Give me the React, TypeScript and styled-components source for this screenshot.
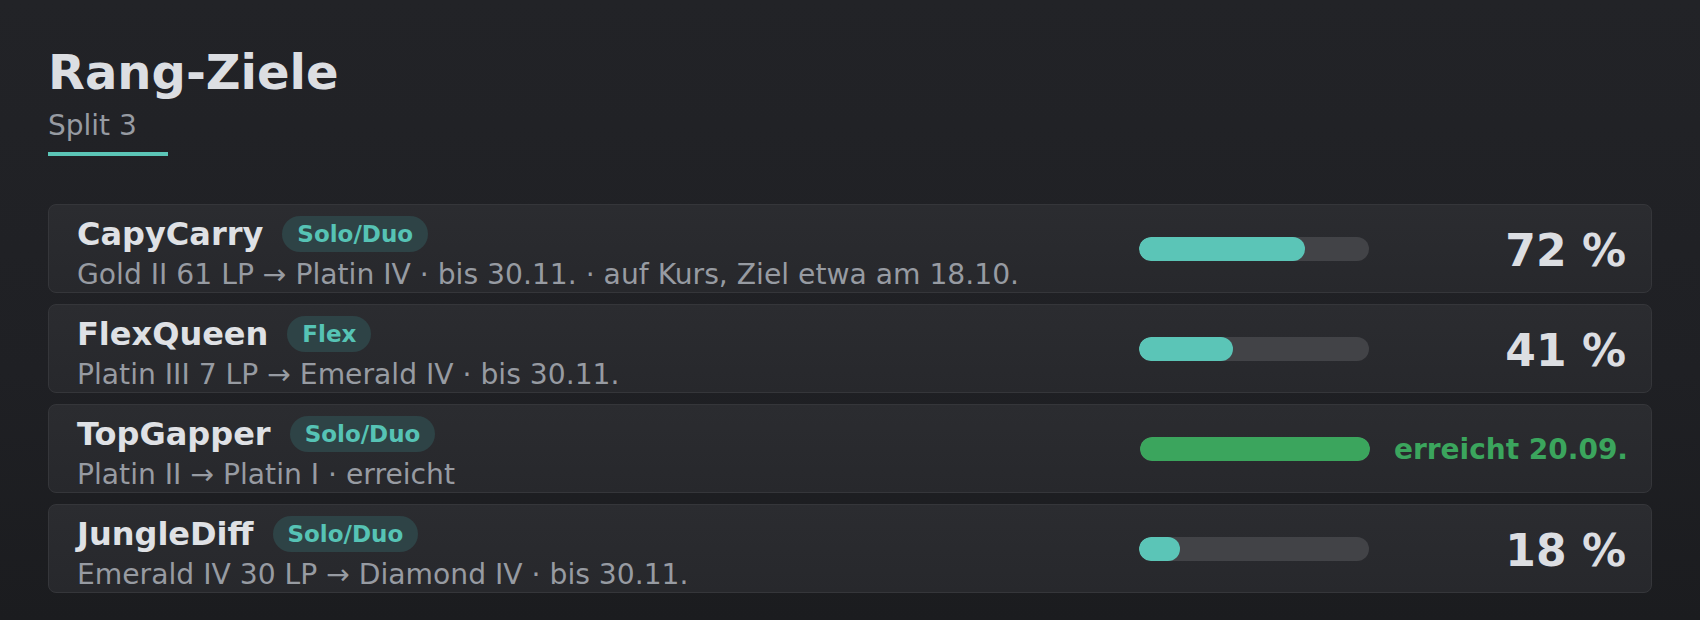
import React from 'react';
import styled, { createGlobalStyle } from 'styled-components';

type Goal = {
    id: number,
    name: string,
    queue: string,
    route: string,
    progress: number,
    reached?: string
}

const goals: Goal[] = [
    { id: 1, name: 'CapyCarry', queue: 'Solo/Duo', route: 'Gold II 61 LP → Platin IV · bis 30.11. · auf Kurs, Ziel etwa am 18.10.', progress: 72 },
    { id: 2, name: 'FlexQueen', queue: 'Flex', route: 'Platin III 7 LP → Emerald IV · bis 30.11.', progress: 41 },
    { id: 3, name: 'TopGapper', queue: 'Solo/Duo', route: 'Platin II → Platin I · erreicht', progress: 100, reached: 'erreicht 20.09.' },
    { id: 4, name: 'JungleDiff', queue: 'Solo/Duo', route: 'Emerald IV 30 LP → Diamond IV · bis 30.11.', progress: 18 },
]

const teal = '#5bc5b7';
const green = '#3ba55d';
const light = '#dcdee2';
const grey = '#979ba2';

const GlobalStyle = createGlobalStyle`
    html, body {
        margin: 0;
        padding: 0;
        background: #1b1c1f;
    }
    body {
        font-family: "DejaVu Sans", "Liberation Sans", sans-serif;
    }
`

const Page = styled.main`
    min-height: 620px;
    box-sizing: border-box;
    padding: 44px 48px 20px;
    background: linear-gradient(180deg, #222327 0%, #1f2024 60%, #1b1c1f 100%);
`

const Title = styled.h1`
    margin: 0;
    font-size: 48px;
    line-height: 1.2;
    font-weight: 700;
    color: ${light};
`

const Subtitle = styled.div`
    margin-top: 7px;
    font-size: 28px;
    line-height: 1.2;
    color: ${grey};
`

const Underline = styled.div`
    margin-top: 10px;
    width: 120px;
    height: 4px;
    background: ${teal};
`

const List = styled.div`
    margin-top: 48px;
    display: flex;
    flex-direction: column;
    gap: 11px;
`

const Card = styled.div`
    display: flex;
    align-items: center;
    height: 89px;
    box-sizing: border-box;
    padding: 0 25px 0 28px;
    border: 1px solid #35363a;
    border-radius: 8px;
    background: linear-gradient(180deg, #2b2c30 0%, #27282c 100%);
`

const Info = styled.div`
    flex: 1;
    min-width: 0;
    padding-top: 10px;
`

const NameRow = styled.div`
    display: flex;
    align-items: center;
    gap: 19px;
    height: 36px;
`

const Name = styled.span`
    font-size: 32px;
    font-weight: 700;
    color: #dfe1e5;
    line-height: 1.2;
`

const Badge = styled.span`
    display: inline-flex;
    align-items: center;
    height: 36px;
    padding: 0 15px;
    border-radius: 18px;
    background: #2e4346;
    color: #56c3b5;
    font-size: 23px;
    font-weight: 700;
`

const Route = styled.div`
    margin-top: 6px;
    font-size: 28.2px;
    line-height: 1.2;
    color: ${grey};
    white-space: nowrap;
`

const Track = styled.div`
    flex: 0 0 230px;
    height: 24px;
    border-radius: 12px;
    background: #424347;
    overflow: hidden;
`

const Fill = styled.div<{ $done: boolean }>`
    height: 100%;
    border-radius: 12px;
    background: ${p => p.$done ? green : teal};
`

const Value = styled.div<{ $done: boolean }>`
    flex: 0 0 233px;
    margin-left: 24px;
    text-align: right;
    font-weight: 700;
    line-height: 1.2;
    white-space: nowrap;
    color: ${p => p.$done ? green : light};
    font-size: ${p => p.$done ? '28px' : '44px'};
    padding-top: ${p => p.$done ? '3px' : '6px'};
    margin-right: ${p => p.$done ? '-2px' : '0'};
`

export default function App() {
    return (
        <>
            <GlobalStyle />
            <Page>
                <Title>Rang-Ziele</Title>
                <Subtitle>Split 3</Subtitle>
                <Underline />
                <List>
                    {goals.map(goal => {
                        const done = !!goal.reached
                        return (
                            <Card key={goal.id}>
                                <Info>
                                    <NameRow>
                                        <Name>{goal.name}</Name>
                                        <Badge>{goal.queue}</Badge>
                                    </NameRow>
                                    <Route>{goal.route}</Route>
                                </Info>
                                <Track>
                                    <Fill $done={done} style={{ width: `${goal.progress}%` }} />
                                </Track>
                                <Value $done={done}>{done ? goal.reached : `${goal.progress} %`}</Value>
                            </Card>
                        )
                    })}
                </List>
            </Page>
        </>
    );
}
